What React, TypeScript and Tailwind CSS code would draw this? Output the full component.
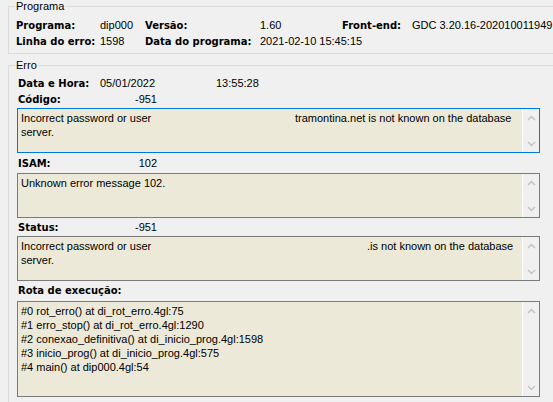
import { ReactNode } from "react";

const reg = "font-['Liberation_Sans',Arial,sans-serif] text-[11px] text-black";
const bold = "font-['DejaVu_Sans',Verdana,sans-serif] font-bold text-[10px] text-black";

function GroupBox({ title, className, children }: { title: string; className?: string; children: ReactNode }) {
    return (
        <fieldset className={`ml-[8px] w-[560px] border border-[#dcdcdc] ${className ?? ""}`}>
            <legend className={`${reg} ml-[6px] px-[1px] leading-[13px]`}>{title}</legend>
            {children}
        </fieldset>
    );
}

function Chevron({ up }: { up?: boolean }) {
    return (
        <svg width="9" height="6" viewBox="0 0 9 6">
            <path
                d={up ? "M1 5 L4.5 1.5 L8 5" : "M1 1 L4.5 4.5 L8 1"}
                fill="none"
                stroke="#c3c3c3"
                strokeWidth="1.5"
            />
        </svg>
    );
}

function TextBox({ focused, className, children }: { focused?: boolean; className: string; children: ReactNode }) {
    return (
        <div
            className={`flex w-[523px] border bg-[#ece9d8] ${focused ? "border-[#0078d7]" : "border-[#7a7a7a]"} ${className}`}
        >
            <div className={`${reg} flex-1 pl-[3px] pt-[2px] leading-[14px]`}>{children}</div>
            <div className="flex w-[17px] flex-col justify-between border-l border-white bg-[#f0f0f0]">
                <div className="flex h-[17px] items-center justify-center">
                    <Chevron up />
                </div>
                <div className="flex h-[17px] items-center justify-center">
                    <Chevron />
                </div>
            </div>
        </div>
    );
}

function Label({ text, value, className }: { text: string; value: string; className: string }) {
    return (
        <div className={`flex items-baseline pl-[1px] ${className}`}>
            <span className={`${bold} w-[82px]`}>{text}</span>
            <span className={`${reg} w-[57px] text-right`}>{value}</span>
        </div>
    );
}

export default function App() {
    return (
        <div className="h-[402px] w-[553px] overflow-hidden bg-[#f0f0f0]">
            <GroupBox title="Programa" className="pb-[4px]">
                <div className="pl-[7px] pt-[4px]">
                    <div className="flex h-[16px] items-baseline leading-[16px]">
                        <span className={`${bold} w-[84px]`}>Programa:</span>
                        <span className={`${reg} w-[45px]`}>dip000</span>
                        <span className={`${bold} w-[115px]`}>Versão:</span>
                        <span className={`${reg} w-[82px]`}>1.60</span>
                        <span className={`${bold} w-[70px]`}>Front-end:</span>
                        <span className={`${reg} whitespace-nowrap`}>GDC 3.20.16-202010011949</span>
                    </div>
                    <div className="flex h-[16px] items-baseline leading-[16px]">
                        <span className={`${bold} w-[84px]`}>Linha do erro:</span>
                        <span className={`${reg} w-[45px]`}>1598</span>
                        <span className={`${bold} w-[115px]`}>Data do programa:</span>
                        <span className={reg}>2021-02-10 15:45:15</span>
                    </div>
                </div>
            </GroupBox>

            <GroupBox title="Erro" className="mt-[5px] pb-[20px]">
                <div className="pl-[8px] pt-[3px]">
                    <div className="flex h-[16px] items-baseline pl-[1px] leading-[16px]">
                        <span className={`${bold} w-[82px]`}>Data e Hora:</span>
                        <span className={`${reg} w-[116px]`}>05/01/2022</span>
                        <span className={reg}>13:55:28</span>
                    </div>
                    <Label text="Código:" value="-951" className="h-[16px] leading-[16px]" />

                    <TextBox focused className="mt-[1px] h-[45px]">
                        <div className="flex whitespace-nowrap">
                            <span className="w-[274px]">Incorrect password or user</span>
                            <span>tramontina.net is not known on the database</span>
                        </div>
                        <div>server.</div>
                    </TextBox>

                    <Label text="ISAM:" value="102" className="h-[20px] leading-[20px]" />
                    <TextBox className="h-[45px]">
                        <div>Unknown error message 102.</div>
                    </TextBox>

                    <Label text="Status:" value="-951" className="h-[18px] leading-[18px]" />
                    <TextBox className="h-[45px]">
                        <div className="flex whitespace-nowrap">
                            <span className="w-[346px]">Incorrect password or user</span>
                            <span>.is not known on the database</span>
                        </div>
                        <div>server.</div>
                    </TextBox>

                    <div className="flex h-[20px] items-baseline pl-[1px] leading-[20px]">
                        <span className={bold}>Rota de execução:</span>
                    </div>
                    <TextBox className="h-[96px]">
                        <div>#0 rot_erro() at di_rot_erro.4gl:75</div>
                        <div>#1 erro_stop() at di_rot_erro.4gl:1290</div>
                        <div>#2 conexao_definitiva() at di_inicio_prog.4gl:1598</div>
                        <div>#3 inicio_prog() at di_inicio_prog.4gl:575</div>
                        <div>#4 main() at dip000.4gl:54</div>
                    </TextBox>
                </div>
            </GroupBox>
        </div>
    );
}
